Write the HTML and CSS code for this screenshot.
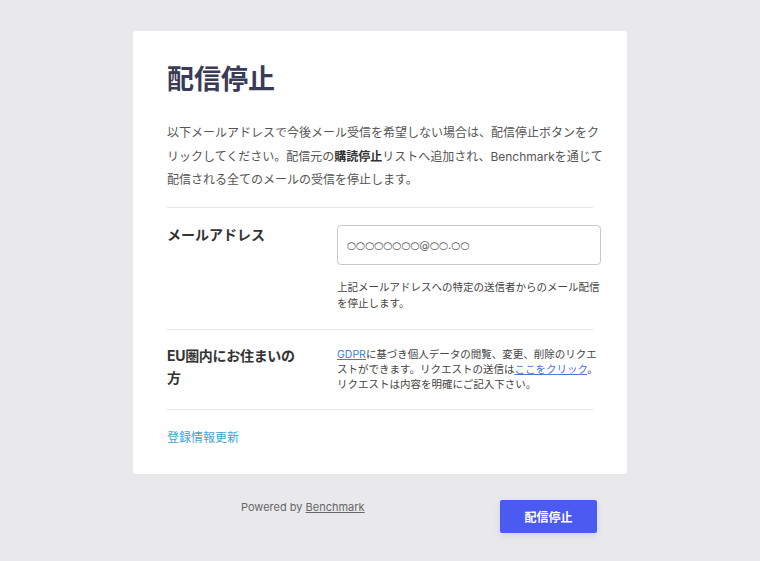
FILE: index.html
```html
<!DOCTYPE html>
<html lang="ja">
<head>
	<meta charset="utf-8">
	<title>配信停止</title>
	<link rel="stylesheet" href="styles.css">
</head>
<body>
	<div class="page">
		<div class="card">
			<h1 class="title">配信停止</h1>
			<p class="intro">以下メールアドレスで今後メール受信を希望しない場合は、配信停止ボタンをク<br>リックしてください。配信元の<b>購読停止</b>リストへ追加され、Benchmarkを通じて<br>配信される全てのメールの受信を停止します。</p>

			<div class="row">
				<div class="label">メールアドレス</div>
				<div class="field">
					<div class="input">○○○○○○○○@○○.○○</div>
					<p class="help help-email">上記メールアドレスへの特定の送信者からのメール配信<br>を停止します。</p>
				</div>
			</div>

			<div class="row">
				<div class="label label-eu">EU圏内にお住まいの<br>方</div>
				<div class="field">
					<p class="help help-eu"><a href="#">GDPR</a>に基づき個人データの閲覧、変更、削除のリクエ<br>ストができます。リクエストの送信は<a href="#">ここをクリック</a>。<br>リクエストは内容を明確にご記入下さい。</p>
				</div>
			</div>

			<div class="update">
				<a href="#">登録情報更新</a>
			</div>
		</div>

		<div class="footer">
			<div class="powered">Powered by <a href="#">Benchmark</a></div>
			<button class="submit" type="button">配信停止</button>
		</div>
	</div>
</body>
</html>
```

FILE: styles.css
```css
html, body {
	margin: 0;
	padding: 0;
}
body {
	background-color: #e9e9eb;
	font-family: "Inter", "Noto Sans CJK JP", sans-serif;
	color: #444;
	min-height: 561px;
}
.page {
	width: 494px;
	margin: 0 auto;
	padding-top: 31px;
}
.card {
	background-color: #fff;
	border-radius: 3px;
	padding: 32px 34px 27px 34px;
}
.title {
	margin: 0;
	font-size: 27px;
	line-height: 34px;
	font-weight: 700;
	color: #393b57;
}
.intro {
	margin: 24px 0 0 0;
	padding-bottom: 15px;
	font-size: 12px;
	line-height: 23.5px;
	color: #555;
	border-bottom: 1px solid #e6e6e8;
	white-space: nowrap;
}
.intro b {
	color: #333;
}
.row {
	display: flex;
	border-bottom: 1px solid #e6e6e8;
}
.label {
	width: 170px;
	flex: none;
	font-size: 14px;
	font-weight: 700;
	color: #333;
}
.field {
	width: 264px;
	margin-right: -8px;
}
.row:nth-of-type(1) {
	padding: 17px 0 17px 0;
}
.row:nth-of-type(1) .label {
	line-height: 20px;
}
.row:nth-of-type(2) {
	padding: 15px 0 17px 0;
}
.label-eu {
	line-height: 22px;
	letter-spacing: -0.3px;
}
.input {
	box-sizing: border-box;
	height: 40px;
	border: 1px solid #c9c9cc;
	border-radius: 4px;
	padding: 0 9px;
	font-family: "DejaVu Sans", sans-serif;
	font-size: 10.4px;
	line-height: 38px;
	color: #555;
}
.help {
	margin: 0;
	font-size: 10.5px;
	color: #444;
	white-space: nowrap;
}
.help-email {
	margin-top: 15px;
	line-height: 16px;
}
.help-eu {
	margin-top: 2px;
	line-height: 15px;
}
.help a {
	color: #4a78d6;
}
.update {
	padding-top: 19px;
	font-size: 12px;
	line-height: 18px;
}
.update a {
	color: #43a4d4;
	text-decoration: none;
}
.footer {
	display: flex;
	justify-content: space-between;
	align-items: flex-start;
	padding: 26px 30px 0 108px;
}
.powered {
	font-size: 11px;
	line-height: 14px;
	color: #666;
}
.powered a {
	color: #666;
}
.submit {
	width: 97px;
	height: 33px;
	border: 0;
	border-radius: 2px;
	background-color: #4b5bf2;
	color: #fff;
	font-family: "Inter", "Noto Sans CJK JP", sans-serif;
	font-size: 12px;
	font-weight: 700;
	box-shadow: 0 2px 6px rgba(60, 70, 200, 0.15);
	cursor: pointer;
}
```
